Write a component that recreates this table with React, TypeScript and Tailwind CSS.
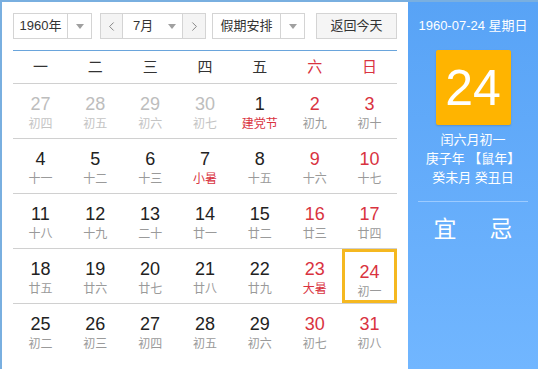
import { ChevronLeft, ChevronRight } from "lucide-react";

type Day = {
  n: number;
  lunar: string;
  muted?: boolean;
  red?: boolean;
  festival?: boolean;
  selected?: boolean;
};

const font = { fontFamily: '"Liberation Sans", "Noto Sans CJK SC", sans-serif' };

const weeks: Day[][] = [
  [
    { n: 27, lunar: "初四", muted: true },
    { n: 28, lunar: "初五", muted: true },
    { n: 29, lunar: "初六", muted: true },
    { n: 30, lunar: "初七", muted: true },
    { n: 1, lunar: "建党节", festival: true },
    { n: 2, lunar: "初九", red: true },
    { n: 3, lunar: "初十", red: true },
  ],
  [
    { n: 4, lunar: "十一" },
    { n: 5, lunar: "十二" },
    { n: 6, lunar: "十三" },
    { n: 7, lunar: "小暑", festival: true },
    { n: 8, lunar: "十五" },
    { n: 9, lunar: "十六", red: true },
    { n: 10, lunar: "十七", red: true },
  ],
  [
    { n: 11, lunar: "十八" },
    { n: 12, lunar: "十九" },
    { n: 13, lunar: "二十" },
    { n: 14, lunar: "廿一" },
    { n: 15, lunar: "廿二" },
    { n: 16, lunar: "廿三", red: true },
    { n: 17, lunar: "廿四", red: true },
  ],
  [
    { n: 18, lunar: "廿五" },
    { n: 19, lunar: "廿六" },
    { n: 20, lunar: "廿七" },
    { n: 21, lunar: "廿八" },
    { n: 22, lunar: "廿九" },
    { n: 23, lunar: "大暑", red: true, festival: true },
    { n: 24, lunar: "初一", red: true, selected: true },
  ],
  [
    { n: 25, lunar: "初二" },
    { n: 26, lunar: "初三" },
    { n: 27, lunar: "初四" },
    { n: 28, lunar: "初五" },
    { n: 29, lunar: "初六" },
    { n: 30, lunar: "初七", red: true },
    { n: 31, lunar: "初八", red: true },
  ],
];

const Caret = () => (
  <span className="flex w-[24px] items-center justify-center self-stretch border-l border-[#d4d4d4]">
    <svg width="8" height="5" viewBox="0 0 8 5">
      <path d="M0 0h8L4 5z" fill="#a0a0a0" />
    </svg>
  </span>
);

const Cell = ({ d }: { d: Day }) => {
  const numColor = d.muted ? "text-[#bdbdbd]" : d.red ? "text-[#d9333f]" : "text-[#222]";
  const lunarColor = d.festival ? "text-[#d9333f]" : d.muted ? "text-[#c4c4c4]" : "text-[#9a9a9a]";
  return (
    <div
      className={`flex h-[54px] flex-col items-center pt-[10px] ${
        d.selected ? "border-[3px] border-[#f5b820] pt-[7px]" : ""
      }`}
    >
      <div className={`text-[18px] leading-[20px] ${numColor}`}>{d.n}</div>
      <div className={`mt-[2px] text-[12px] leading-[16px] ${lunarColor}`}>{d.lunar}</div>
    </div>
  );
};

export default function App() {
  return (
    <div
      style={font}
      className="flex h-[369px] w-[538px] overflow-hidden border-l-2 border-t-2 border-[#79afe0] bg-white"
    >
      <div className="w-[406px] shrink-0 px-[11px] pt-[11px]">
        <div className="flex h-[26px] items-stretch text-[13px] text-[#333]">
          <div className="flex w-[79px] items-center border border-[#d4d4d4]">
            <span className="flex-1 text-center">1960年</span>
            <Caret />
          </div>
          <div className="ml-[8px] flex w-[106px] items-center border border-[#d4d4d4]">
            <span className="flex w-[22px] items-center justify-center self-stretch border-r border-[#d4d4d4] bg-[#f4f4f4]">
              <ChevronLeft size={15} strokeWidth={1.25} color="#666" />
            </span>
            <span className="flex flex-1 items-center justify-between self-stretch pl-[10px] pr-[6px]">
              <span>7月</span>
              <svg width="8" height="5" viewBox="0 0 8 5">
                <path d="M0 0h8L4 5z" fill="#a0a0a0" />
              </svg>
            </span>
            <span className="flex w-[23px] items-center justify-center self-stretch border-l border-[#d4d4d4] bg-[#f4f4f4]">
              <ChevronRight size={15} strokeWidth={1.25} color="#666" />
            </span>
          </div>
          <div className="ml-[6px] flex w-[93px] items-center border border-[#d4d4d4]">
            <span className="flex-1 text-center">假期安排</span>
            <Caret />
          </div>
          <div className="ml-[11px] flex w-[81px] items-center justify-center border border-[#d4d4d4] bg-[#f5f5f5]">
            返回今天
          </div>
        </div>

        <div className="mt-[11px] border-t border-[#6aa5dc]" />

        <div className="grid h-[33px] grid-cols-7 items-center border-b border-[#d0d0d0] text-[15px] text-[#333]">
          {["一", "二", "三", "四", "五", "六", "日"].map((w, i) => (
            <div key={w} className={`text-center ${i >= 5 ? "text-[#d9333f]" : ""}`}>
              {w}
            </div>
          ))}
        </div>

        {weeks.map((row, ri) => (
          <div
            key={ri}
            className={`grid grid-cols-7 ${ri < weeks.length - 1 ? "border-b border-[#d0d0d0]" : ""}`}
          >
            {row.map((d, ci) => (
              <Cell key={ci} d={d} />
            ))}
          </div>
        ))}
      </div>

      <div className="flex flex-1 flex-col items-center bg-gradient-to-b from-[#58a3f6] to-[#71b6ff] text-white">
        <div className="mt-[15px] text-[13px] leading-[18px]">1960-07-24 星期日</div>
        <div className="mt-[15px] flex h-[75px] w-[75px] items-center justify-center rounded-[2px] bg-[#ffb400] text-[50px] leading-none shadow-[0_1px_2px_rgba(0,0,0,0.15)]">
          24
        </div>
        <div className="mt-[5px] text-center text-[13px] leading-[19px]">
          <div>闰六月初一</div>
          <div>庚子年 【鼠年】</div>
          <div>癸未月 癸丑日</div>
        </div>
        <div className="mt-[14px] w-[110px] border-t border-[#9ccbff]" />
        <div className="mt-[13px] flex gap-[33px] text-[23px] leading-[28px]">
          <span>宜</span>
          <span>忌</span>
        </div>
      </div>
    </div>
  );
}
